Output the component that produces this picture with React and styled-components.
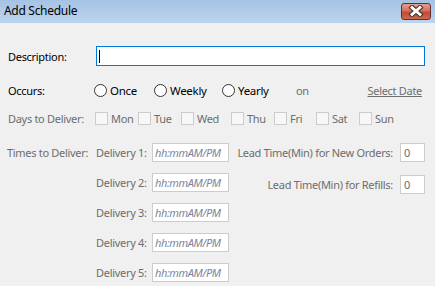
import React from "react";
import styled, { createGlobalStyle } from "styled-components";

const GlobalStyle = createGlobalStyle`
  html, body {
    margin: 0;
    padding: 0;
    background: #f0f0f0;
  }
  * {
    box-sizing: border-box;
  }
`;

const days = ["Mon", "Tue", "Wed", "Thu", "Fri", "Sat", "Sun"];
const dayWidths = [43, 43, 50, 43, 42, 43, 40];

const App = () => {
  return (
    <>
      <GlobalStyle />
      <Window>
        <TitleBar>
          <Title>Add Schedule</Title>
          <CloseButton>
            <svg width="18" height="12" viewBox="0 0 18 12">
              <path d="M5 2.5 L13 9.5 M13 2.5 L5 9.5" stroke="#4e3434" strokeWidth="5" strokeLinecap="square" />
              <path d="M5 2.5 L13 9.5 M13 2.5 L5 9.5" stroke="#ffffff" strokeWidth="2.8" strokeLinecap="square" />
            </svg>
          </CloseButton>
        </TitleBar>
        <Body>
          <Row height={20} top={23}>
            <Label width={87}>Description:</Label>
            <TextBox focused>
              <Caret />
            </TextBox>
          </Row>
          <Row height={16} top={16}>
            <Label width={86}>Occurs:</Label>
            <Radio width={60}>
              <RadioCircle />
              Once
            </Radio>
            <Radio width={68}>
              <RadioCircle />
              Weekly
            </Radio>
            <Radio width={74}>
              <RadioCircle />
              Yearly
            </Radio>
            <OnText>on</OnText>
            <SelectDate>Select Date</SelectDate>
          </Row>
          <Row height={14} top={13}>
            <Label width={87} disabled>
              Days to Deliver:
            </Label>
            {days.map((d, i) => (
              <Check key={d} width={dayWidths[i]}>
                <CheckBox />
                {d}
              </Check>
            ))}
          </Row>
          <TimesSection>
            <TimesLabel>Times to Deliver:</TimesLabel>
            <Deliveries>
              {[1, 2, 3, 4, 5].map((n) => (
                <DeliveryRow key={n}>
                  <DeliveryLabel>Delivery {n}:</DeliveryLabel>
                  <TimeBox>hh:mmAM/PM</TimeBox>
                </DeliveryRow>
              ))}
            </Deliveries>
            <LeadTimes>
              <LeadRow>
                <LeadLabel>Lead Time(Min) for New Orders:</LeadLabel>
                <NumBox>0</NumBox>
              </LeadRow>
              <LeadRow>
                <LeadLabel>Lead Time(Min) for Refills:</LeadLabel>
                <NumBox>0</NumBox>
              </LeadRow>
            </LeadTimes>
          </TimesSection>
        </Body>
      </Window>
    </>
  );
};

const Window = styled.div`
  width: 435px;
  height: 286px;
  background: #f0f0f0;
  font-family: "Noto Sans", "Open Sans", sans-serif;
  font-size: 11px;
  letter-spacing: -0.3px;
  color: #000;
  overflow: hidden;
`;

const TitleBar = styled.div`
  height: 23px;
  display: flex;
  align-items: center;
  justify-content: space-between;
  padding: 0 4px 2px 4px;
  background: linear-gradient(#a6c2e3, #bdd4ee);
`;

const Title = styled.div`
  font-size: 12px;
  color: #000;
  letter-spacing: -0.3px;
`;

const CloseButton = styled.div`
  width: 30px;
  height: 17px;
  margin-top: 1px;
  border: 1px solid #6b2b33;
  border-radius: 3px;
  background: linear-gradient(#e0a08f 0%, #d4715d 45%, #c24a31 55%, #cf6a50 100%);
  display: flex;
  align-items: center;
  justify-content: center;
`;

const Body = styled.div`
  padding: 0 10px 0 8px;
`;

const Row = styled.div`
  display: flex;
  align-items: center;
  height: ${({ height }) => height}px;
  margin-top: ${({ top }) => top}px;
`;

const Label = styled.div`
  width: ${({ width }) => width}px;
  flex-shrink: 0;
  color: ${({ disabled }) => (disabled ? "#6d6d6d" : "#000")};
`;

const TextBox = styled.div`
  flex: 1;
  height: 20px;
  margin-left: 1px;
  background: #fff;
  border: 1px solid ${({ focused }) => (focused ? "#0078d7" : "#c6c6c6")};
  display: flex;
  align-items: center;
  padding-left: 2px;
`;

const Caret = styled.span`
  width: 1px;
  height: 13px;
  background: #000;
`;

const Radio = styled.div`
  width: ${({ width }) => width}px;
  display: flex;
  align-items: center;
  gap: 3px;
  font-size: 11.5px;
`;

const RadioCircle = styled.span`
  width: 13px;
  height: 13px;
  border-radius: 50%;
  border: 1px solid #333;
  background: #fff;
`;

const OnText = styled.div`
  color: #6d6d6d;
  margin-left: 0;
`;

const SelectDate = styled.div`
  margin-left: auto;
  margin-right: 3px;
  color: #6d6d6d;
  text-decoration: underline;
`;

const Check = styled.div`
  width: ${({ width }) => width}px;
  flex-shrink: 0;
  display: flex;
  align-items: center;
  gap: 3px;
  color: #6d6d6d;
`;

const CheckBox = styled.span`
  width: 13px;
  height: 13px;
  border: 1px solid #cccccc;
  background: #f7f7f7;
`;

const TimesSection = styled.div`
  display: flex;
  margin-top: 18px;
`;

const TimesLabel = styled.div`
  width: 89px;
  margin-left: -1px;
  color: #6d6d6d;
  line-height: 19px;
`;

const Deliveries = styled.div`
  display: flex;
  flex-direction: column;
  gap: 11px;
`;

const DeliveryRow = styled.div`
  display: flex;
  align-items: center;
  height: 19px;
`;

const DeliveryLabel = styled.div`
  width: 56px;
  color: #6d6d6d;
`;

const TimeBox = styled.div`
  width: 77px;
  height: 19px;
  background: #fff;
  border: 1px solid #cccccc;
  padding-left: 2px;
  font-style: italic;
  color: #7b8599;
  line-height: 17px;
  font-size: 11px;
  letter-spacing: -0.4px;
`;

const LeadTimes = styled.div`
  margin-left: auto;
  display: flex;
  flex-direction: column;
  gap: 13px;
`;

const LeadRow = styled.div`
  display: flex;
  align-items: center;
  justify-content: flex-end;
  gap: 7px;
  height: 19px;
`;

const LeadLabel = styled.div`
  color: #6d6d6d;
`;

const NumBox = styled.div`
  width: 25px;
  height: 19px;
  background: #fff;
  border: 1px solid #cccccc;
  padding-left: 3px;
  color: #6d6d6d;
  line-height: 17px;
`;

export default App;
